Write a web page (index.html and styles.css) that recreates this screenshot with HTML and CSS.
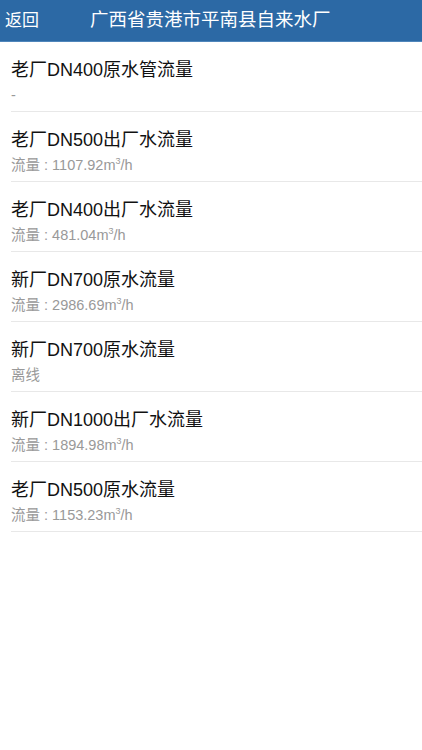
FILE: index.html
```html
<!DOCTYPE html>
<html lang="zh">
<head>
<meta charset="utf-8">
<link rel="stylesheet" href="styles.css">
</head>
<body>
<header class="nav">
  <span class="back">返回</span>
  <span class="title">广西省贵港市平南县自来水厂</span>
</header>
<ul class="list">
  <li class="row"><div class="name">老厂DN400原水管流量</div><div class="sub">-</div></li>
  <li class="row"><div class="name">老厂DN500出厂水流量</div><div class="sub">流量 : 1107.92m<sup>3</sup>/h</div></li>
  <li class="row"><div class="name">老厂DN400出厂水流量</div><div class="sub">流量 : 481.04m<sup>3</sup>/h</div></li>
  <li class="row"><div class="name">新厂DN700原水流量</div><div class="sub">流量 : 2986.69m<sup>3</sup>/h</div></li>
  <li class="row"><div class="name">新厂DN700原水流量</div><div class="sub">离线</div></li>
  <li class="row"><div class="name">新厂DN1000出厂水流量</div><div class="sub">流量 : 1894.98m<sup>3</sup>/h</div></li>
  <li class="row"><div class="name">老厂DN500原水流量</div><div class="sub">流量 : 1153.23m<sup>3</sup>/h</div></li>
</ul>
</body>
</html>
```
FILE: styles.css
```css
html, body {
  margin: 0;
  padding: 0;
  background: #fff;
  font-family: "Liberation Sans", "Noto Sans CJK SC", sans-serif;
}
.nav {
  height: 42px;
  background: #2c69a5;
  border-bottom: 1px solid #4f86bb;
  box-sizing: border-box;
  display: flex;
  align-items: center;
  color: #fff;
}
.back {
  font-size: 17px;
  padding-left: 5px;
  width: 85px;
  line-height: 1;
}
.title {
  font-size: 18.5px;
  line-height: 1;
}
.list {
  list-style: none;
  margin: 0;
  padding: 0 0 0 11px;
}
.row {
  height: 70px;
  box-sizing: border-box;
  border-bottom: 1px solid #e8e8e8;
  padding-top: 15px;
}
.name {
  font-size: 18px;
  line-height: 26px;
  color: #111;
}
.sub {
  font-size: 14.5px;
  line-height: 20px;
  color: #999;
  margin-top: 2px;
}
.sub sup {
  font-size: 9px;
  line-height: 0;
  vertical-align: 6px;
}
```
